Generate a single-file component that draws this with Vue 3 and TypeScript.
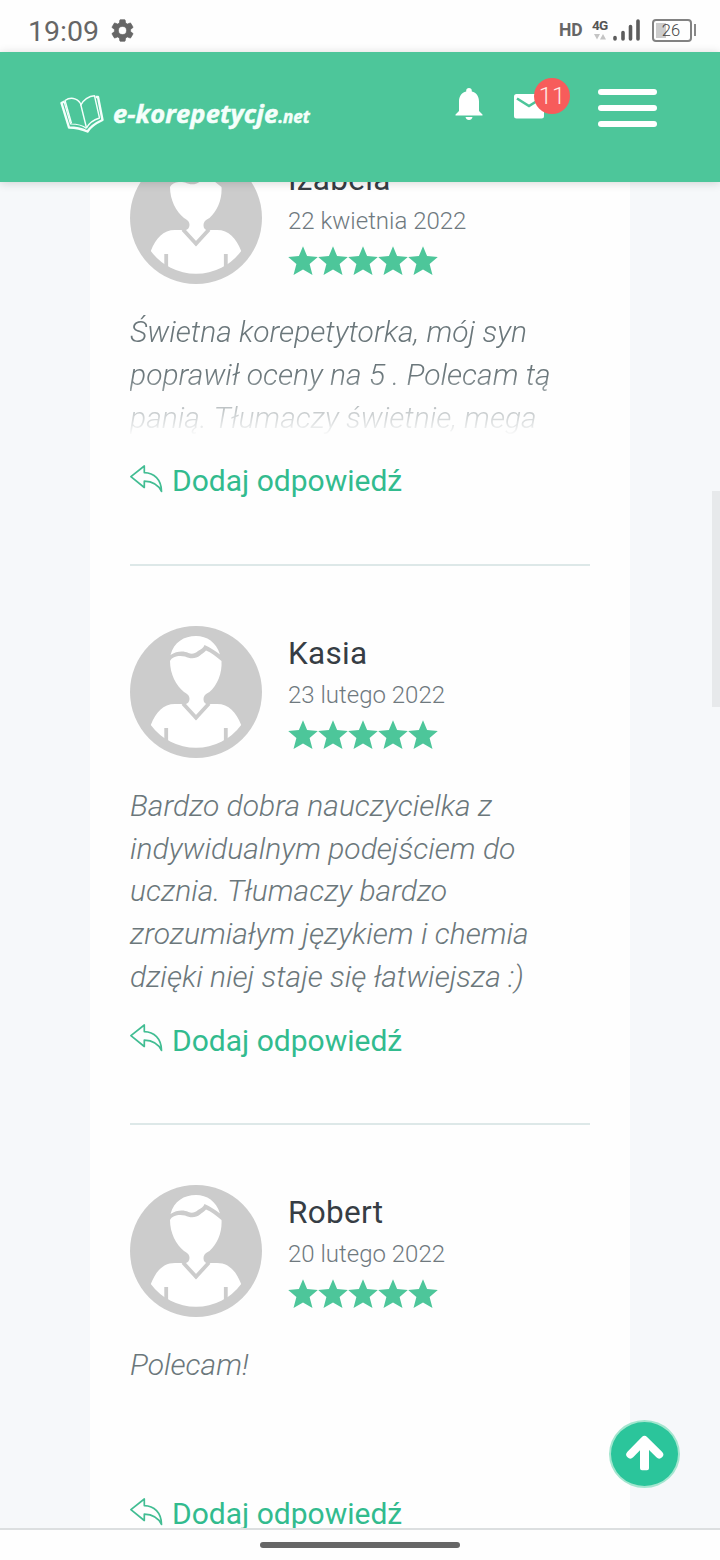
<script setup lang="ts">
interface Review {
  name: string
  date: string
  lines: string[]
  faded: boolean
}

const reviews: Review[] = [
  {
    name: 'Izabela',
    date: '22 kwietnia 2022',
    lines: ['Świetna korepetytorka, mój syn', 'poprawił oceny na 5 . Polecam tą', 'panią. Tłumaczy świetnie, mega'],
    faded: true,
  },
  {
    name: 'Kasia',
    date: '23 lutego 2022',
    lines: [
      'Bardzo dobra nauczycielka z',
      'indywidualnym podejściem do',
      'ucznia. Tłumaczy bardzo',
      'zrozumiałym językiem i chemia',
      'dzięki niej staje się łatwiejsza :)',
    ],
    faded: false,
  },
  { name: 'Robert', date: '20 lutego 2022', lines: ['Polecam!'], faded: false },
]
</script>

<template>
  <div class="screen">
    <div class="status">
      <span class="clock">19:09</span>
      <svg class="gear" width="27" height="27" viewBox="0 0 24 24">
        <path
          fill="#666"
          stroke="#666"
          stroke-width=".6"
          d="M19.14 12.94c.04-.3.06-.61.06-.94 0-.32-.02-.64-.07-.94l2.03-1.58c.18-.14.23-.41.12-.61l-1.92-3.32c-.12-.22-.37-.29-.59-.22l-2.39.96c-.5-.38-1.03-.7-1.62-.94l-.36-2.54c-.04-.24-.24-.41-.48-.41h-3.84c-.24 0-.43.17-.47.41l-.36 2.54c-.59.24-1.13.57-1.62.94l-2.39-.96c-.22-.08-.47 0-.59.22L2.74 8.87c-.12.21-.08.47.12.61l2.03 1.58c-.05.3-.09.63-.09.94s.02.64.07.94l-2.03 1.58c-.18.14-.23.41-.12.61l1.92 3.32c.12.22.37.29.59.22l2.39-.96c.5.38 1.03.7 1.62.94l.36 2.54c.05.24.24.41.48.41h3.84c.24 0 .44-.17.47-.41l.36-2.54c.59-.24 1.13-.56 1.62-.94l2.39.96c.22.08.47 0 .59-.22l1.92-3.32c.12-.22.07-.47-.12-.61l-2.01-1.58zM12 15.6A3.6 3.6 0 1 1 12 8.400a3.6 3.6 0 0 1 0 7.2z"
        />
      </svg>
      <span class="hd">HD</span>
      <span class="net">
        <span class="net-label">4G</span>
        <svg width="12" height="6" viewBox="0 0 12 6">
          <path fill="#c4c4c4" d="M0 0h6L3 5.500zM6 5.500h6L9 0z" />
        </svg>
      </span>
      <svg class="signal" width="27" height="23" viewBox="0 0 27 23">
        <g stroke="#5c5c5c" stroke-width="3.600" stroke-linecap="round">
          <path d="M2 18.500v1.500M10 13.500v6.500M17.500 7.500v12.500M25 2v18" />
        </g>
      </svg>
      <span class="battery"><span class="charge"></span><span class="level">26</span></span>
      <span class="battery-tip"></span>
    </div>

    <header class="topbar">
      <svg class="book" width="44" height="38" viewBox="0 0 44 38" fill="none" stroke="#f4fffb" stroke-linejoin="round">
        <path stroke-width="1.400" d="M11.500 28.500L5 5.500C10 2 17 2.500 20.500 8.500L26.500 33" />
        <path stroke-width="1.400" d="M20.500 10.500C23 5 29 1 34.500 .8L39.500 23C33 25 29 28 26.500 33" />
        <path stroke-width="2.400" d="M4.500 6.500L1.500 8L9 32.500C16 32.500 21 33.500 27.500 36.500C31 31 36 28 42.500 25L38 2h-2.500" />
        <path stroke-width="1.200" d="M4 6.500L10.500 29C17 29 23 30.500 26.500 33.500" />
      </svg>
      <span class="brand">e-korepetycje<span class="brand-tld">.net</span></span>
      <svg class="bell" width="28" height="33" viewBox="0 0 28 33" fill="#fff">
        <path d="M14 0c-1.700 0-2.800 1.100-2.800 2.700v.8C6.500 4.700 4 8.500 4 13.500V23L.5 26.500V27.500h27v-1L24 23v-9.500c0-5-2.500-8.800-7.200-10v-.8C16.800 1.100 15.700 0 14 0zM10.500 29h7c-.4 1.800-1.700 3-3.500 3s-3.100-1.200-3.500-3z" />
      </svg>
      <div class="mail">
        <svg width="30" height="25" viewBox="0 0 30 25">
          <rect width="30" height="24.500" rx="2.500" fill="#fff" />
          <path d="M3 4.500l12 7.500 12-7.500" fill="none" stroke="#4dc59a" stroke-width="2.600" />
        </svg>
        <span class="badge">11</span>
      </div>
      <div class="menu"><i></i><i></i><i></i></div>
    </header>

    <main class="viewport">
      <div class="card">
        <article v-for="r in reviews" :key="r.name" class="review">
          <div class="head">
            <svg class="avatar" width="132" height="132" viewBox="0 0 132 132">
              <circle cx="66" cy="66" r="66" fill="#ccc" />
              <path fill="#fff" d="M40.500 29C44 16 54 10 66 10c11 0 20 6 24 18.500C86 25 80 21.500 74.500 19c-1 3-3.500 4.500-6.500 6-3 2.500-6 3.500-9.500 2-5-2.500-12-2-18 2z" />
              <path fill="#fff" d="M40 35c2-4.500 9-6 15-4.500 5 2.500 11 2.500 15-1 2-1.800 4-2.500 6-5 5 2 10 6 15.500 10.500.8 12-4 24-12 31-4 2-6 3.500-6 7.500 0 3 2 4.800 4.500 5L66 89.500 54.500 78.500c3-.5 5-2.500 5-5.500 0-3.500-2-5-5.500-7C46 59.500 40 48 40 35z" />
              <path fill="#fff" d="M20.800 99C26 86 33 78 45 78h7.500L66 93.800 79.500 78H87c12 0 19 8 24.200 21A56 56 0 0 1 66 121.800 56 56 0 0 1 20.800 99z" />
              <path fill="none" stroke="#ccc" stroke-width="3.800" d="M53 77.500l13 14.300 13-14.300M36.200 102v17M95.800 102v17" />
            </svg>
            <div class="meta">
              <div class="name">{{ r.name }}</div>
              <div class="date">{{ r.date }}</div>
              <div class="stars">
                <svg v-for="n in 5" :key="n" width="30" height="30" viewBox="0 0 30 30">
                  <path fill="#4dc69a" d="M15 .3l4.100 9.800 10.700.8-8.200 7.200 2.900 11L15 23.500l-9.500 5.600 2.900-11L.2 10.900l10.700-.8z" />
                </svg>
              </div>
            </div>
          </div>
          <div class="body" :class="{ faded: r.faded }">
            <div v-for="line in r.lines" :key="line">{{ line }}</div>
          </div>
          <a class="reply">
            <svg width="33" height="28" viewBox="0 0 33 28" fill="none" stroke="#42bd93" stroke-width="1.700" stroke-linejoin="round">
              <path d="M.9 11.700L14.300 1v6.600C24 7.800 31.500 14.500 31.500 26.500 28 19 22 16.500 14.300 16.200v6.300z" />
            </svg>
            <span>Dodaj odpowiedź</span>
          </a>
        </article>
      </div>
      <div class="scrollbar"></div>
      <div class="to-top">
        <svg width="38" height="36" viewBox="0 0 38 36" fill="none" stroke="#fff" stroke-linejoin="round">
          <path d="M4.300 19.500L18.500 5l14.700 14.500" stroke-width="8" stroke-linecap="round" />
          <path d="M16 7h5v26.200h-5z" fill="#fff" stroke-width="4" />
        </svg>
      </div>
    </main>

    <footer class="navbar"><span class="pill"></span></footer>
  </div>
</template>

<style>
body {
  margin: 0;
}
</style>

<style scoped>
.screen {
  width: 720px;
  height: 1560px;
  overflow: hidden;
  display: flex;
  flex-direction: column;
  background: #f6f8fa;
  font-family: Roboto, "Liberation Sans", sans-serif;
}
.status {
  height: 52px;
  flex: none;
  display: flex;
  align-items: center;
  background: #fefefe;
  color: #666;
  padding: 8px 24px 0 28px;
  box-sizing: border-box;
}
.clock {
  font-size: 28.500px;
  line-height: 44px;
  width: 81px;
  padding-top: 3px;
  white-space: nowrap;
}
.gear {
  flex: none;
}
.hd {
  margin-left: auto;
  width: 33px;
  font-size: 17.500px;
  font-weight: 700;
}
.net {
  width: 21px;
  display: flex;
  flex-direction: column;
  font-size: 13.500px;
  font-weight: 700;
  line-height: 13px;
  color: #555;
}
.net-label {
  margin-top: -1px;
  letter-spacing: -0.8px;
}
.net svg {
  margin: 2px 0 0 2px;
}
.signal {
  margin-right: 12px;
}
.battery {
  width: 40px;
  height: 23px;
  box-sizing: border-box;
  border: 2px solid #828282;
  border-radius: 4px;
  display: grid;
  align-items: center;
  padding: 2px;
}
.charge,
.level {
  grid-area: 1 / 1;
}
.charge {
  width: 10px;
  height: 15px;
  background: #ccc;
}
.level {
  font-size: 16.500px;
  line-height: 15px;
  text-align: center;
  padding-right: 2px;
  font-weight: 300;
  color: #444;
}
.battery-tip {
  width: 2px;
  height: 12px;
  margin-left: 2px;
  background: #888;
}
.topbar {
  height: 130px;
  flex: none;
  box-sizing: border-box;
  padding: 0 62px 0 60px;
  background: #4dc69a;
  display: flex;
  align-items: flex-start;
  position: relative;
  z-index: 2;
  box-shadow: 0 1px 9px rgba(0, 0, 0, 0.16);
}
.book {
  margin-top: 43px;
  flex: none;
}
.brand {
  margin: 45px 0 0 9px;
  width: 342px;
  white-space: nowrap;
  font: italic 700 25.500px/32px "Open Sans", sans-serif;
  letter-spacing: 0.1px;
  color: #f4fffb;
  -webkit-text-stroke: 0.5px #f4fffb;
}
.brand-tld {
  font-size: 17px;
  letter-spacing: 0;
}
.bell {
  margin-top: 36px;
  flex: none;
}
.mail {
  position: relative;
  margin: 42px 0 0 31px;
  width: 84px;
}
.mail svg {
  display: block;
}
.badge {
  position: absolute;
  left: 20px;
  top: -16px;
  width: 36px;
  height: 36px;
  border-radius: 50%;
  background: #f75c5b;
  color: #ffe9e5;
  font-size: 24px;
  font-weight: 300;
  line-height: 37px;
  text-align: center;
}
.menu {
  margin-top: 37px;
  flex: none;
  display: flex;
  flex-direction: column;
  gap: 10px;
}
.menu i {
  width: 59px;
  height: 6px;
  border-radius: 3px;
  background: #fff;
}
.viewport {
  flex: 1;
  min-height: 0;
  overflow: hidden;
  position: relative;
}
.card {
  margin: -30px auto 0;
  width: 540px;
  box-sizing: border-box;
  padding: 0 40px;
  background: #fefefe;
}
.review {
  padding-bottom: 61.600px;
  border-bottom: 2px solid #dde8e8;
  margin-bottom: 60px;
}
.head {
  display: flex;
  gap: 26px;
}
.avatar {
  flex: none;
}
.meta {
  padding-top: 7px;
}
.name {
  font-size: 31.500px;
  line-height: 42px;
  letter-spacing: 0.3px;
  color: #363d44;
}
.date {
  font-size: 24px;
  line-height: 41px;
  font-weight: 300;
  color: #6f797e;
}
.stars {
  display: flex;
  margin-top: 4px;
}
.body {
  margin-top: 27px;
  min-height: 128.250px;
  font-size: 30px;
  line-height: 42.750px;
  font-style: italic;
  font-weight: 300;
  color: #6b777b;
  white-space: nowrap;
}
.faded {
  mask-image: linear-gradient(#000 50%, rgba(0, 0, 0, 0.5) 72%, transparent 98%);
}
.reply {
  margin-top: 20px;
  height: 43px;
  display: flex;
  gap: 9px;
  font-size: 30px;
  line-height: 43px;
  color: #32bb8e;
}
.reply svg {
  margin-top: 5.500px;
}
.scrollbar {
  position: absolute;
  right: 0;
  top: 309px;
  width: 8px;
  height: 216px;
  background: #e7e9eb;
}
.to-top {
  position: absolute;
  left: 609px;
  top: 1238px;
  width: 71px;
  height: 68px;
  box-sizing: border-box;
  border: 2px solid #a3e6cf;
  border-radius: 50%;
  background: #2bc59b;
  display: flex;
  justify-content: center;
  padding-top: 13px;
}
.navbar {
  height: 32px;
  flex: none;
  box-sizing: border-box;
  border-top: 2px solid #dcdfe0;
  background: #fefefe;
  display: flex;
  justify-content: center;
  padding-top: 12px;
}
.pill {
  width: 200px;
  height: 6px;
  border-radius: 3px;
  background: #666;
}
</style>
